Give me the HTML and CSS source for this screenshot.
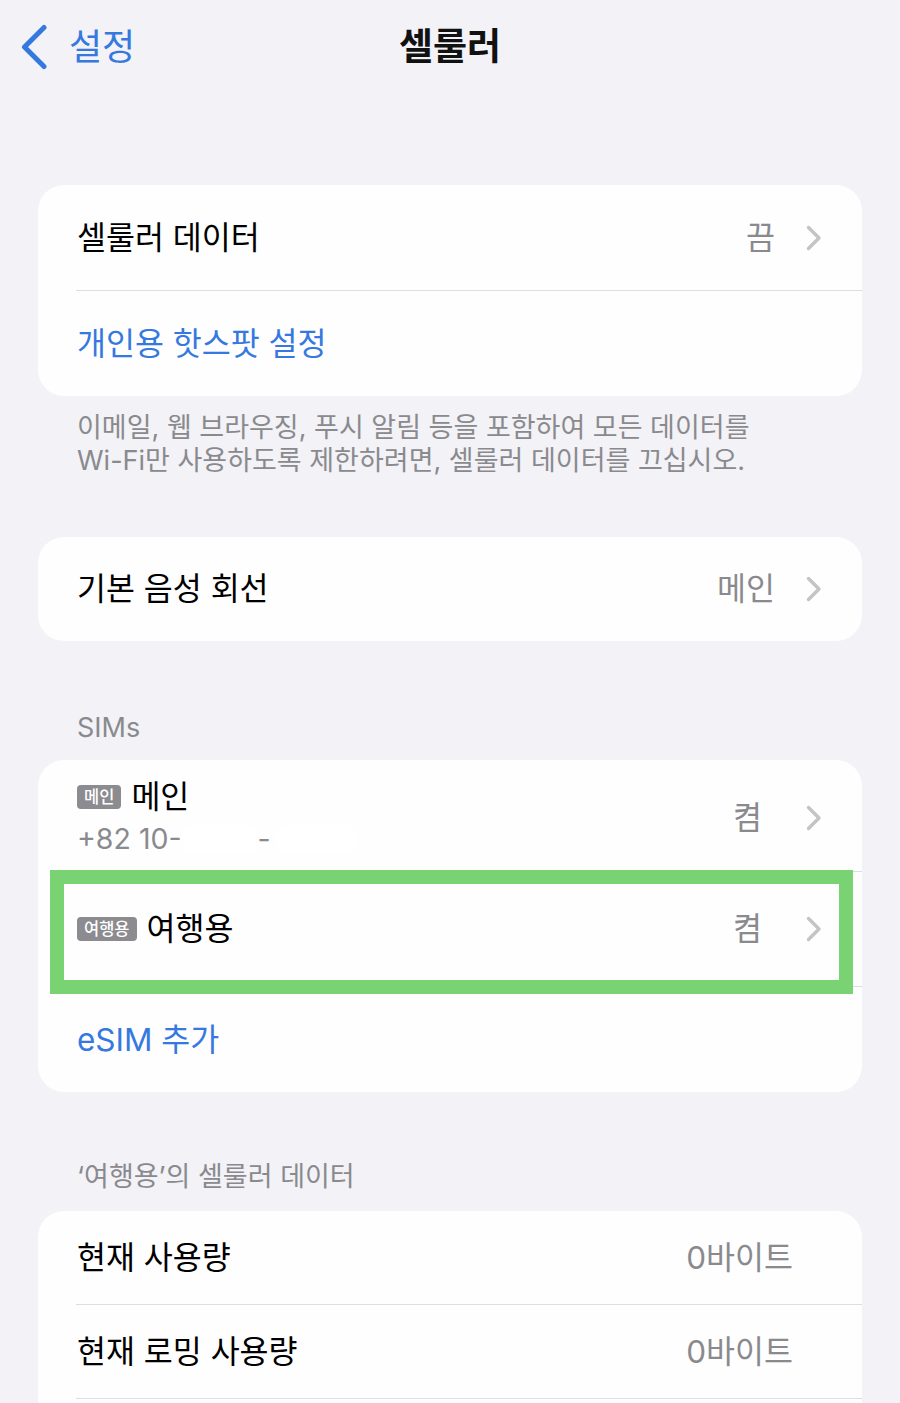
FILE: index.html
```html
<!DOCTYPE html>
<html lang="ko">
<head>
<meta charset="utf-8">
<title>셀룰러</title>
<link rel="stylesheet" href="styles.css">
</head>
<body>
<header class="nav">
  <a class="back">
    <svg class="back-icon" width="28" height="46" viewBox="0 0 28 46"><path d="M24 3.5 L4.5 23 L24 42.5" fill="none" stroke="#3579e0" stroke-width="5" stroke-linecap="round" stroke-linejoin="round"/></svg>
    <span class="back-text">설정</span>
  </a>
  <h1 class="title">셀룰러</h1>
  <div class="nav-spacer"></div>
</header>

<main class="content">
  <section class="group">
    <div class="row">
      <span class="label">셀룰러 데이터</span>
      <span class="value">끔</span>
      <svg class="chev" width="16" height="26" viewBox="0 0 16 26"><path d="M2.5 2.5 L13 13 L2.5 23.5" fill="none" stroke="#c4c4c8" stroke-width="3.4" stroke-linecap="round" stroke-linejoin="round"/></svg>
    </div>
    <div class="sep"></div>
    <div class="row">
      <span class="label link">개인용 핫스팟 설정</span>
    </div>
  </section>
  <p class="footnote">이메일, 웹 브라우징, 푸시 알림 등을 포함하여 모든 데이터를<br>Wi-Fi만 사용하도록 제한하려면, 셀룰러 데이터를 끄십시오.</p>

  <section class="group group-voice">
    <div class="row row-voice">
      <span class="label">기본 음성 회선</span>
      <span class="value">메인</span>
      <svg class="chev" width="16" height="26" viewBox="0 0 16 26"><path d="M2.5 2.5 L13 13 L2.5 23.5" fill="none" stroke="#c4c4c8" stroke-width="3.4" stroke-linecap="round" stroke-linejoin="round"/></svg>
    </div>
  </section>

  <h2 class="section-head head-sims">SIMs</h2>
  <section class="group group-sims">
    <div class="row row-sim-main">
      <div class="label sim-col">
        <div class="sim-line"><span class="badge">메인</span><span>메인</span></div>
        <div class="phone"><span>+82 10-</span><span class="mask"></span><span>-</span><span class="mask mask-wide"></span></div>
      </div>
      <span class="value value-on">켬</span>
      <svg class="chev" width="16" height="26" viewBox="0 0 16 26"><path d="M2.5 2.5 L13 13 L2.5 23.5" fill="none" stroke="#c4c4c8" stroke-width="3.4" stroke-linecap="round" stroke-linejoin="round"/></svg>
    </div>
    <div class="sep"></div>
    <div class="row row-sim-travel">
      <div class="label sim-line"><span class="badge">여행용</span><span>여행용</span></div>
      <span class="value value-on">켬</span>
      <svg class="chev" width="16" height="26" viewBox="0 0 16 26"><path d="M2.5 2.5 L13 13 L2.5 23.5" fill="none" stroke="#c4c4c8" stroke-width="3.4" stroke-linecap="round" stroke-linejoin="round"/></svg>
    </div>
    <div class="sep"></div>
    <div class="row">
      <span class="label link">eSIM 추가</span>
    </div>
    <div class="highlight"></div>
  </section>

  <h2 class="section-head head-data">‘여행용’의 셀룰러 데이터</h2>
  <section class="group">
    <div class="row row-usage">
      <span class="label">현재 사용량</span>
      <span class="value">0바이트</span>
    </div>
    <div class="sep"></div>
    <div class="row row-usage">
      <span class="label">현재 로밍 사용량</span>
      <span class="value">0바이트</span>
    </div>
    <div class="sep"></div>
    <div class="row row-usage"></div>
  </section>
</main>
</body>
</html>
```

FILE: styles.css
```css
* { box-sizing: border-box; }

html, body {
  margin: 0;
  padding: 0;
}

body {
  background: #f2f2f7;
  font-family: Inter, "Noto Sans CJK KR", sans-serif;
  color: #000;
  overflow: hidden;
  height: 1403px;
}

.nav {
  display: grid;
  grid-template-columns: 1fr auto 1fr;
  align-items: center;
  height: 94px;
  padding-left: 20px;
}

.back {
  display: flex;
  align-items: center;
  gap: 21px;
  color: #3579e0;
  text-decoration: none;
}

.back-icon { display: block; }

.back-text {
  font-size: 36px;
  line-height: 46px;
}

.title {
  margin: 0;
  font-size: 37px;
  line-height: 46px;
  font-weight: 700;
  color: #111;
  padding-right: 20px;
}

.content {
  padding-top: 91px;
}

.group {
  position: relative;
  margin: 0 38px;
  background: #fefefe;
  border-radius: 26px;
}

.row {
  display: flex;
  align-items: center;
  height: 105px;
  padding: 0 40px 0 39px;
  font-size: 31.5px;
}

.label {
  flex: 1;
  line-height: 40px;
  white-space: nowrap;
}

.link { color: #3579e0; }

.value {
  color: #8a8a8e;
  line-height: 40px;
  margin-right: 31px;
}

.value-on { margin-right: 44px; }

.chev { display: block; flex: none; }

.sep {
  height: 1px;
  margin-left: 38px;
  background: #dedee2;
}

.footnote {
  margin: 0 38px;
  padding: 15px 39px 0;
  font-size: 27px;
  line-height: 33px;
  color: #8a8a8e;
  white-space: nowrap;
}

.group-voice { margin-top: 60px; }
.row-voice { height: 104px; }

.section-head {
  margin: 0 38px;
  padding: 0 39px;
  font-size: 27px;
  line-height: 33px;
  font-weight: 400;
  color: #8a8a8e;
  white-space: nowrap;
}

.head-sims { margin-top: 70px; margin-bottom: 16px; }
.head-data { margin-top: 68px; margin-bottom: 18px; }

.row-sim-main {
  height: 111px;
  padding-top: 5px;
}

.sim-col {
  display: flex;
  flex-direction: column;
}

.sim-line {
  display: flex;
  align-items: center;
  gap: 10px;
  height: 42px;
}

.badge {
  display: inline-block;
  background: #8b8b90;
  color: #fff;
  font-size: 16.5px;
  line-height: 24px;
  height: 24px;
  padding: 0 7px;
  border-radius: 4px;
  font-weight: 500;
}

.phone {
  display: flex;
  align-items: center;
  height: 42px;
  font-size: 28.5px;
  color: #8a8a8e;
}

.mask {
  display: inline-block;
  width: 76px;
  height: 30px;
  background: #fff;
  border-radius: 14px;
}

.mask-wide { width: 80px; margin-left: 6px; }

.row-sim-travel { height: 114px; }

.highlight {
  position: absolute;
  left: 12px;
  top: 110px;
  width: 803px;
  height: 124px;
  border: 14px solid #79d373;
}

.row-usage {
  height: 93px;
  padding-right: 69px;
}

.row-usage .value { margin-right: 0; }
```
